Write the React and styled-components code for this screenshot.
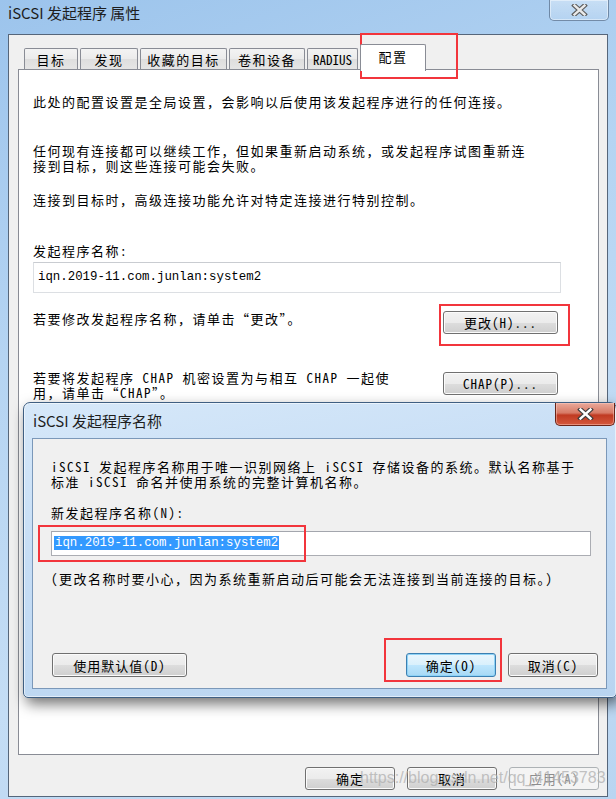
import React from "react";
import styled, { createGlobalStyle, css } from "styled-components";

const GlobalStyle = createGlobalStyle`
  html, body {
    margin: 0;
    padding: 0;
  }
  body {
    width: 616px;
    height: 799px;
    overflow: hidden;
    background: #ffffff;
    font-family: "Noto Sans Mono CJK SC", "Noto Sans CJK SC", monospace;
    font-size: 13px;
    letter-spacing: 1.5px;
    line-height: 15px;
    color: #000;
  }
`;

const Desktop = styled.div`
  position: relative;
  width: 616px;
  height: 799px;
  overflow: hidden;
`;

/* ---------- main window ---------- */

const Window = styled.div`
  width: 616px;
  height: 799px;
  box-sizing: border-box;
  padding-bottom: 2px;
  display: flex;
  flex-direction: column;
  background: linear-gradient(160deg, #9cc4ec 0%, #b5d4f2 35%, #c4ddf5 70%, #b9d5f1 100%);
`;

const TitleBar = styled.div`
  height: 34px;
  display: flex;
  justify-content: space-between;
  align-items: flex-start;
  flex-shrink: 0;
`;

const TitleText = styled.div`
  padding: 4px 0 0 8px;
  font-family: "Noto Sans CJK SC", "Liberation Sans", sans-serif;
  font-size: 15px;
  letter-spacing: 0;
  line-height: 18px;
  color: #1e1e1e;
`;

const CloseButton = styled.div`
  width: 58px;
  height: 20px;
  margin-right: 7px;
  display: flex;
  align-items: center;
  justify-content: center;
  border: 1px solid rgba(70, 95, 125, 0.65);
  border-top: none;
  border-radius: 0 0 5px 5px;
  ${(p) =>
    p.$active
      ? css`
          height: 22px;
          margin-right: 1px;
          border-color: #6a2418;
          background: linear-gradient(
            to bottom,
            #e9a99a 0%,
            #d77a66 45%,
            #c03a22 55%,
            #d4583d 100%
          );
          box-shadow: inset 0 0 0 1px rgba(255, 210, 200, 0.45);
        `
      : css`
          background: linear-gradient(
            to bottom,
            rgba(255, 255, 255, 0.35),
            rgba(255, 255, 255, 0.1)
          );
          box-shadow: inset 0 0 0 1px rgba(255, 255, 255, 0.45);
        `}
`;

const Client = styled.div`
  flex: 1;
  margin: 0 8px;
  padding: 9px 8px 0 9px;
  background: #f0f0f0;
  border: 1px solid #56667a;
  display: flex;
  flex-direction: column;
`;

const TabStrip = styled.div`
  height: 25px;
  display: flex;
  align-items: flex-end;
  gap: 2px;
  padding-left: 6px;
  position: relative;
  z-index: 1;
`;

const Tab = styled.div`
  width: ${(p) => p.$w}px;
  height: 21px;
  box-sizing: border-box;
  display: flex;
  align-items: center;
  justify-content: center;
  border: 1px solid #898c95;
  border-bottom: none;
  border-radius: 2px 2px 0 0;
  background: linear-gradient(to bottom, #f3f3f3 0%, #ebebeb 50%, #dedede 51%, #e5e5e5 100%);
  letter-spacing: ${(p) => (p.$latin ? 0 : 1.5)}px;
  white-space: nowrap;
  ${(p) =>
    p.$selected &&
    css`
      height: 27px;
      margin-bottom: -2px;
      background: #ffffff;
      padding-bottom: 4px;
    `}
`;

const Panel = styled.div`
  height: 686px;
  flex-shrink: 0;
  box-sizing: border-box;
  border: 1px solid #898c95;
  background: #ffffff;
  padding: 24px 14px 0 14px;
  display: flex;
  flex-direction: column;
`;

const Para = styled.p`
  margin: ${(p) => p.$top || 0}px 0 0;
  white-space: nowrap;
`;

const TextBox = styled.div`
  width: 528px;
  height: 31px;
  margin-top: ${(p) => p.$top || 0}px;
  box-sizing: border-box;
  border: 1px solid #dcdfe3;
  border-top-color: #c9ccd1;
  background: #ffffff;
  padding: 4px 0 0 4px;
`;

const Mono = styled.span`
  font-family: "Liberation Mono", monospace;
  font-size: 12.4px;
  letter-spacing: 0;
  line-height: 16px;
  ${(p) =>
    p.$selected &&
    css`
      line-height: 14px;
      background: #3399ff;
      color: #ffffff;
      display: inline-block;
      padding: 0 1px;
    `}
`;

const ActionRow = styled.div`
  width: 525px;
  margin-top: ${(p) => p.$top}px;
  display: flex;
  justify-content: space-between;
  align-items: flex-start;
`;

const Button = styled.div`
  width: ${(p) => p.$w}px;
  height: ${(p) => p.$h || 23}px;
  margin-top: ${(p) => p.$mt || 0}px;
  box-sizing: border-box;
  display: flex;
  align-items: center;
  justify-content: center;
  border: 1px solid #707070;
  border-radius: 3px;
  background: linear-gradient(to bottom, #f2f2f2 0%, #ebebeb 50%, #dddddd 51%, #cfcfcf 100%);
  box-shadow: inset 0 0 0 1px #fbfbfb;
  letter-spacing: 1px;
  white-space: nowrap;
  flex-shrink: 0;
  ${(p) =>
    p.$default &&
    css`
      border-color: #3c7fb1;
      background: linear-gradient(to bottom, #eaf6fd 0%, #d9f0fc 50%, #bee6fd 51%, #a7d9f5 100%);
      box-shadow: inset 0 0 0 1px #8fd3f6;
    `}
  ${(p) =>
    p.$disabled &&
    css`
      color: #8d8d8d;
      border-color: #adb2b5;
      background: #f4f4f4;
      box-shadow: none;
    `}
`;

const FooterRow = styled.div`
  margin-top: 12px;
  display: flex;
  justify-content: flex-end;
  gap: 12px;
`;

/* ---------- dialog ---------- */

const Dialog = styled.div`
  position: absolute;
  left: 23px;
  top: 402px;
  width: 594px;
  height: 296px;
  box-sizing: border-box;
  display: flex;
  flex-direction: column;
  padding: 0 9px 8px 8px;
  border: 1px solid #3f5f82;
  border-radius: 7px 7px 5px 5px;
  background: linear-gradient(170deg, #d6e8f9 0%, #c6ddf5 40%, #b8d4f0 100%);
  box-shadow: inset 0 0 0 1px rgba(255, 255, 255, 0.55), 3px 6px 14px rgba(0, 0, 0, 0.55);
`;

const DialogTitleBar = styled.div`
  height: 35px;
  display: flex;
  justify-content: space-between;
  align-items: flex-start;
  margin-right: -9px;
`;

const DialogTitle = styled.div`
  padding: 9px 0 0 1px;
  font-family: "Noto Sans CJK SC", "Liberation Sans", sans-serif;
  font-size: 15px;
  letter-spacing: 0;
  line-height: 18px;
  color: #1e1e1e;
`;

const DialogClient = styled.div`
  flex: 1;
  box-sizing: border-box;
  border: 1px solid #7b98b9;
  background: #f0f0f0;
  padding: 20px 8px 11px 18px;
  display: flex;
  flex-direction: column;
`;

const Input = styled.div`
  width: 540px;
  height: 25px;
  margin-top: 11px;
  box-sizing: border-box;
  border: 1px solid #abadb3;
  border-top-color: #a3a6ad;
  background: #ffffff;
  padding: 4px 0 0 2px;
  display: flex;
  align-items: flex-start;
`;

const DialogButtons = styled.div`
  margin-top: auto;
  display: flex;
  align-items: center;
  gap: 12px;
  padding-left: 1px;
`;

const Spacer = styled.div`
  flex: 1;
`;

/* ---------- overlays ---------- */

const RedMark = styled.div`
  position: absolute;
  box-sizing: border-box;
  border: 2px solid #f2353c;
  pointer-events: none;
`;

const Watermark = styled.div`
  position: absolute;
  left: 360px;
  top: 768px;
  font-family: "Liberation Sans", sans-serif;
  font-size: 16px;
  letter-spacing: 0;
  line-height: 20px;
  color: rgba(175, 175, 175, 0.75);
  white-space: nowrap;
`;

const CloseGlyph = ({ light }) => (
  <svg width="17" height="12" viewBox="0 0 17 12">
    <path
      d="M3.5 1.5 L13.5 10.5 M13.5 1.5 L3.5 10.5"
      stroke={light ? "#3c3c3c" : "#5a5a5a"}
      strokeWidth="4.6"
      strokeLinecap="square"
    />
    <path
      d="M3.5 1.5 L13.5 10.5 M13.5 1.5 L3.5 10.5"
      stroke={light ? "#ffffff" : "#e9e9e9"}
      strokeWidth="2.4"
      strokeLinecap="square"
    />
  </svg>
);

const tabs = [
  { label: "目标", w: 54 },
  { label: "发现", w: 58 },
  { label: "收藏的目标", w: 87 },
  { label: "卷和设备", w: 76 },
  { label: "RADIUS", w: 51, latin: true },
  { label: "配置", w: 66, selected: true },
];

const marks = [
  { left: 360, top: 33, width: 98, height: 46 },
  { left: 439, top: 304, width: 131, height: 42 },
  { left: 38, top: 525, width: 268, height: 37 },
  { left: 384, top: 638, width: 118, height: 44 },
];

const App = () => {
  return (
    <Desktop>
      <GlobalStyle />
      <Window>
        <TitleBar>
          <TitleText>iSCSI 发起程序 属性</TitleText>
          <CloseButton>
            <CloseGlyph />
          </CloseButton>
        </TitleBar>
        <Client>
          <TabStrip>
            {tabs.map((t) => (
              <Tab key={t.label} $w={t.w} $selected={t.selected} $latin={t.latin}>
                {t.label}
              </Tab>
            ))}
          </TabStrip>
          <Panel>
            <Para>此处的配置设置是全局设置，会影响以后使用该发起程序进行的任何连接。</Para>
            <Para $top={34}>
              任何现有连接都可以继续工作，但如果重新启动系统，或发起程序试图重新连
              <br />
              接到目标，则这些连接可能会失败。
            </Para>
            <Para $top={19}>连接到目标时，高级连接功能允许对特定连接进行特别控制。</Para>
            <Para $top={36}>发起程序名称:</Para>
            <TextBox $top={4}>
              <Mono>iqn.2019-11.com.junlan:system2</Mono>
            </TextBox>
            <ActionRow $top={18}>
              <Para>若要修改发起程序名称，请单击“更改”。</Para>
              <Button $w={115}>更改(H)...</Button>
            </ActionRow>
            <ActionRow $top={36}>
              <Para>
                若要将发起程序 CHAP 机密设置为与相互 CHAP 一起使
                <br />
                用，请单击“CHAP”。
              </Para>
              <Button $w={115} $mt={2}>
                CHAP(P)...
              </Button>
            </ActionRow>
          </Panel>
          <FooterRow>
            <Button $w={90}>确定</Button>
            <Button $w={90}>取消</Button>
            <Button $w={90} $disabled>
              应用(A)
            </Button>
          </FooterRow>
        </Client>
      </Window>

      <Dialog>
        <DialogTitleBar>
          <DialogTitle>iSCSI 发起程序名称</DialogTitle>
          <CloseButton $active>
            <CloseGlyph light />
          </CloseButton>
        </DialogTitleBar>
        <DialogClient>
          <Para>
            iSCSI 发起程序名称用于唯一识别网络上 iSCSI 存储设备的系统。默认名称基于
            <br />
            标准 iSCSI 命名并使用系统的完整计算机名称。
          </Para>
          <Para $top={16}>新发起程序名称(N):</Para>
          <Input>
            <Mono $selected>iqn.2019-11.com.junlan:system2</Mono>
          </Input>
          <Para $top={15}>(更改名称时要小心，因为系统重新启动后可能会无法连接到当前连接的目标。)</Para>
          <DialogButtons>
            <Button $w={135} $h={24}>
              使用默认值(D)
            </Button>
            <Spacer />
            <Button $w={90} $h={24} $default>
              确定(O)
            </Button>
            <Button $w={90} $h={24}>
              取消(C)
            </Button>
          </DialogButtons>
        </DialogClient>
      </Dialog>

      {marks.map((m, i) => (
        <RedMark
          key={i}
          style={{ left: m.left, top: m.top, width: m.width, height: m.height }}
        />
      ))}
      <Watermark>https://blog.csdn.net/qq_41453783</Watermark>
    </Desktop>
  );
};

export default App;
